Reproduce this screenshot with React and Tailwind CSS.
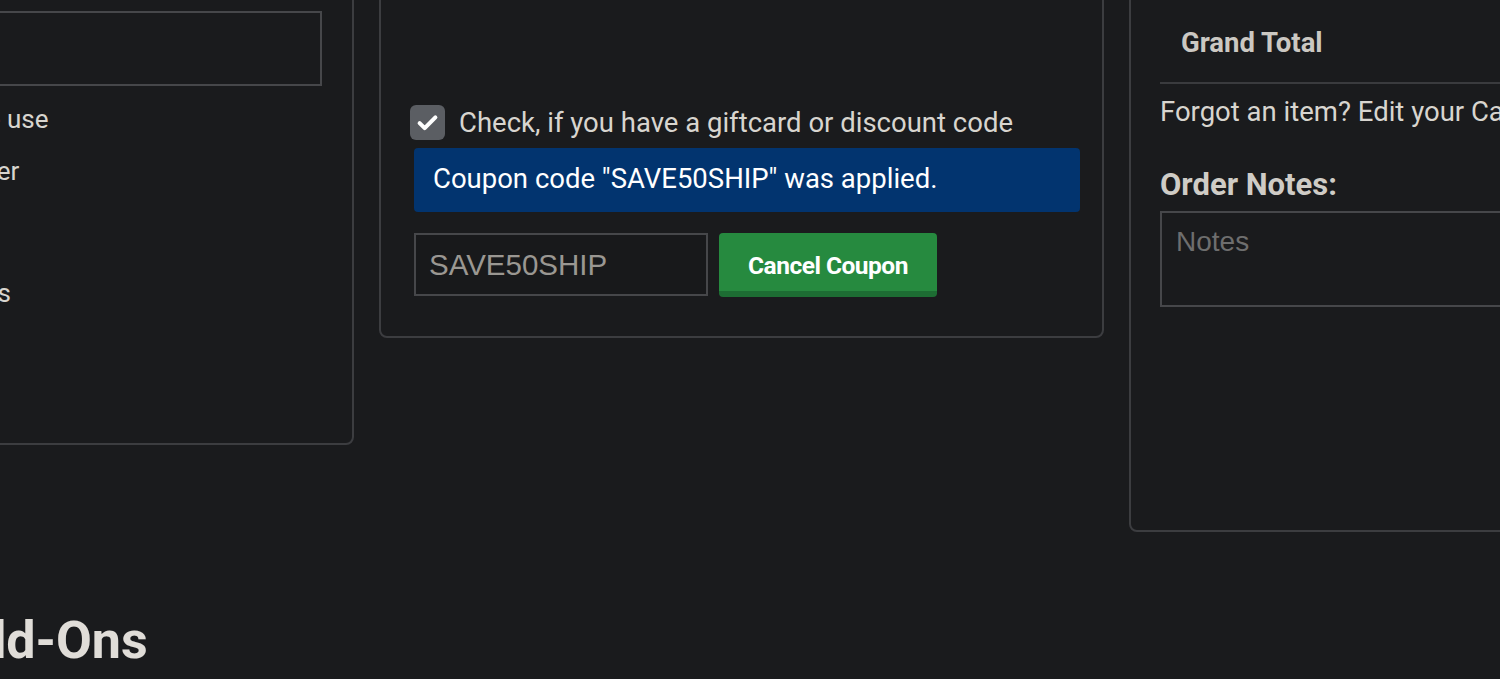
import React, { useState } from "react";

function CheckIcon() {
  return (
    <svg viewBox="0 0 24 24" className="w-[27px] h-[27px]" fill="none" stroke="white" strokeWidth="3.6" strokeLinecap="round" strokeLinejoin="round">
      <path d="M5 12.5l4.5 4.5L19 7.5" />
    </svg>
  );
}

function LeftPanel() {
  return (
    <div className="shrink-0 ml-[-391px] w-[745px] h-[545px] border-2 border-[#3c3d40] rounded-[8px] px-[30px] pt-[109px] whitespace-nowrap">
      <div className="h-[75px] border-2 border-[#46474a]"></div>
      <div className="mt-[14px] text-[26px] leading-[39px]">Save this information for future use</div>
      <div className="mt-[13px] text-[26px] leading-[39px]">Subscribe to the shop newsletter</div>
      <div className="mt-[22px] text-[26px] leading-[39px]">No thanks</div>
      <div className="mt-[22px] text-[26px] leading-[39px]">Notify me about further updates</div>
    </div>
  );
}

function CouponPanel() {
  const [code, setCode] = useState("SAVE50SHIP");
  return (
    <div className="shrink-0 ml-[25px] w-[725px] h-[438px] border-2 border-[#3c3d40] rounded-[8px] flex flex-col justify-end pl-[33px] pr-[22px] pb-[39px]">
      <label className="flex items-center -ml-[4px] cursor-pointer">
        <span className="w-[35px] h-[35px] rounded-[6px] bg-[#5b5e63] flex items-center justify-center">
          <CheckIcon />
        </span>
        <span className="ml-[14px] text-[27.5px] leading-[35px]">Check, if you have a giftcard or discount code</span>
      </label>
      <div className="mt-[8px] h-[64px] rounded-[4px] bg-[#02346f] px-[19px] pb-[3px] flex items-center text-white text-[27.5px]">
        Coupon code "SAVE50SHIP" was applied.
      </div>
      <div className="mt-[21px] flex items-start gap-[11px]">
        <input
          type="text"
          value={code}
          onChange={(e) => setCode(e.target.value)}
          className="w-[294px] h-[63px] border-2 border-[#46474a] bg-[#18191b] px-[13px] text-[29.5px] text-[#9a9792] font-['Liberation_Sans',Arial,sans-serif] outline-none"
        />
        <button className="w-[218px] h-[64px] rounded-[4px] bg-[#268a3f] border-b-[6px] border-[#1d6d33] pt-[8px] text-white font-bold text-[24.5px] tracking-[-0.5px]">
          Cancel Coupon
        </button>
      </div>
    </div>
  );
}

function SummaryPanel() {
  return (
    <div className="shrink-0 ml-[25px] w-[500px] h-[632px] border-2 border-[#3c3d40] rounded-[8px] px-[29px] pt-[100px]">
      <div className="pl-[21px] pt-[21px] pb-[20px] border-b-2 border-[#3a3b3e] text-[27.5px] leading-[39px] font-bold text-[#cbc8c2] whitespace-nowrap">
        Grand Total
      </div>
      <div className="mt-[8px] text-[27.5px] leading-[39px] whitespace-nowrap">Forgot an item? Edit your Cart</div>
      <div className="mt-[36px] text-[31px] leading-[35px] font-bold text-[#cfccc6]">Order Notes:</div>
      <textarea
        placeholder="Notes"
        className="mt-[9px] block w-full h-[96px] border-2 border-[#46474a] bg-transparent px-[14px] py-[13px] text-[28px] leading-[32px] font-['Liberation_Sans',Arial,sans-serif] placeholder:text-[#6e6e6e] resize-none outline-none"
      ></textarea>
    </div>
  );
}

export default function App() {
  return (
    <div className="w-[1500px] h-[679px] overflow-hidden bg-[#1a1b1d] text-[#d8d5cf] font-['Roboto','Noto_Sans',sans-serif]">
      <div className="flex items-start -mt-[100px]">
        <LeftPanel />
        <CouponPanel />
        <SummaryPanel />
      </div>
      <h2 className="mt-[79px] ml-[-58px] text-[52px] leading-[60px] font-bold text-[#e0ddd8] whitespace-nowrap">Add-Ons</h2>
    </div>
  );
}
